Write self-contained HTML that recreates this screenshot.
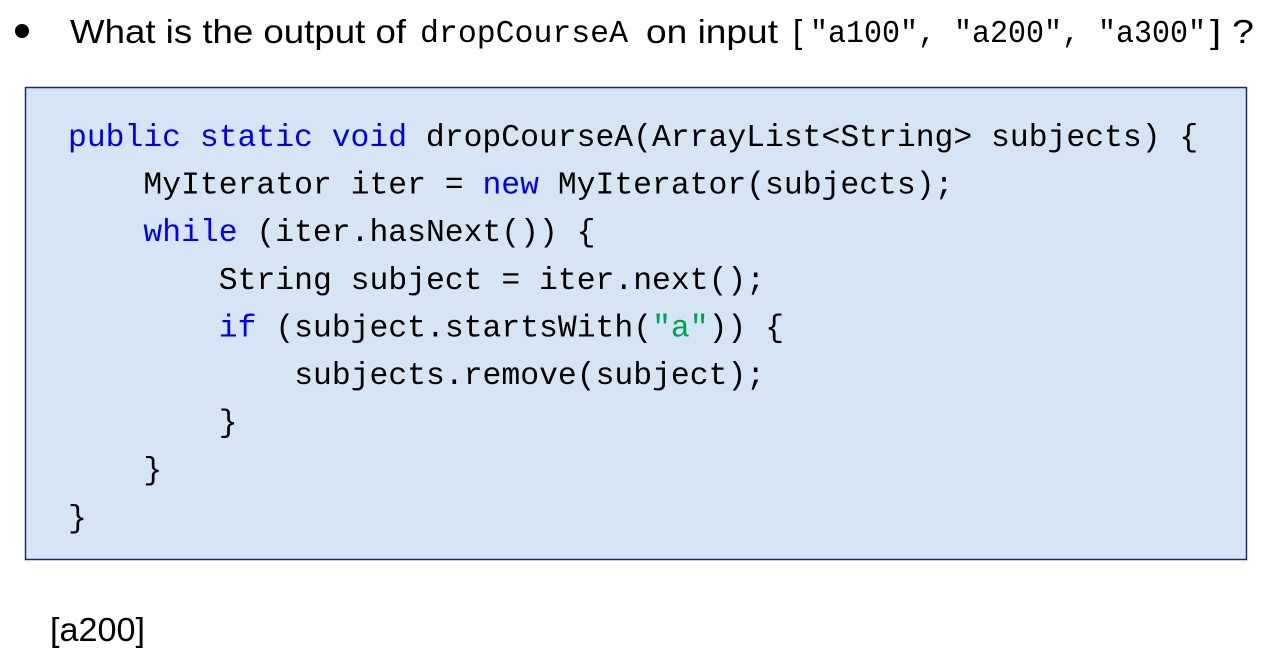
<!DOCTYPE html>
<html><head><meta charset="utf-8"><style>
html,body{margin:0;padding:0;background:#fff;width:1267px;height:663px;overflow:hidden}
svg{display:block}
.m{font-family:"Liberation Mono",monospace;font-size:31.4px}
.s{font-family:"Liberation Sans",sans-serif;font-size:33px}
.k{fill:#0000f0}.g{fill:#00a050}
</style></head><body>
<svg width="1267" height="663" xmlns="http://www.w3.org/2000/svg">
<circle cx="22" cy="31" r="7" fill="#000"/>
<text x="70" y="43" class="s" textLength="336" lengthAdjust="spacingAndGlyphs">What is the output of</text>
<text x="420" y="42" class="m" textLength="208" lengthAdjust="spacingAndGlyphs">dropCourseA</text>
<text x="646" y="43" class="s" textLength="132" lengthAdjust="spacingAndGlyphs">on input</text>
<text x="793" y="43" class="s">[</text>
<text x="810" y="42" class="m" textLength="396" lengthAdjust="spacingAndGlyphs">"a100", "a200", "a300"</text>
<text x="1210" y="43" class="s" textLength="44" lengthAdjust="spacingAndGlyphs">] ?</text>
<rect x="25.5" y="87.5" width="1221" height="472" fill="#d6e5f3" stroke="#1a2a6a" stroke-width="1.5"/>
<g class="m">
<text x="68" y="146"><tspan class="k">public static void</tspan> dropCourseA(ArrayList&lt;String&gt; subjects) {</text>
<text x="143.4" y="193.6">MyIterator iter = <tspan class="k">new</tspan> MyIterator(subjects);</text>
<text x="143.4" y="241.2"><tspan class="k">while</tspan> (iter.hasNext()) {</text>
<text x="218.8" y="288.8">String subject = iter.next();</text>
<text x="218.8" y="336.4"><tspan class="k">if</tspan> (subject.startsWith(<tspan class="g">"a"</tspan>)) {</text>
<text x="294.2" y="384">subjects.remove(subject);</text>
<text x="218.8" y="431.6">}</text>
<text x="143.4" y="479.2">}</text>
<text x="68" y="526.8">}</text>
</g>
<text x="50" y="641" class="s" textLength="95" lengthAdjust="spacingAndGlyphs">[a200]</text>
</svg>
</body></html>
